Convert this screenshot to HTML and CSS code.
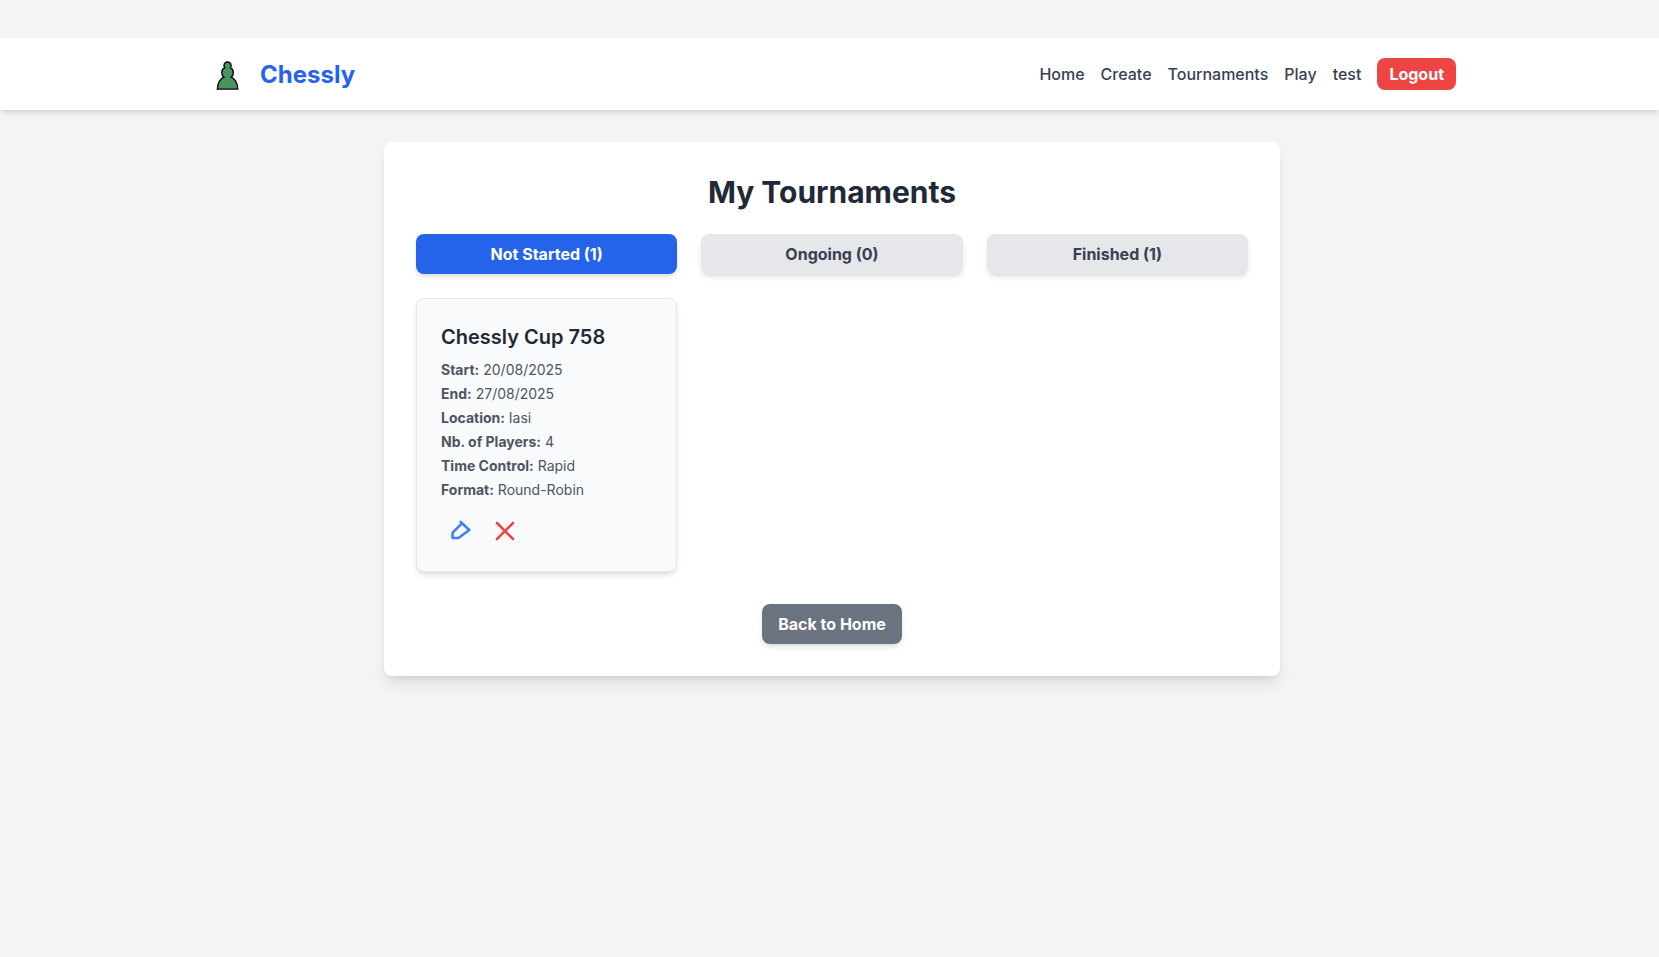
FILE: index.html
```html
<!DOCTYPE html>
<html lang="en">
<head>
<meta charset="utf-8">
<meta name="viewport" content="width=device-width, initial-scale=1">
<title>Chessly</title>
<link rel="stylesheet" href="styles.css">
</head>
<body>
<header class="navbar">
  <div class="navbar-inner">
    <a class="brand" href="#">
      <svg class="brand-logo" viewBox="0 0 45 45" aria-hidden="true"><path d="M22 9c-2.21 0-4 1.79-4 4 0 .89.29 1.71.78 2.38C16.83 16.5 15.5 18.59 15.5 21c0 2.03.94 3.84 2.41 5.03-3 1.06-7.41 5.55-7.41 13.47h23c0-7.92-4.41-12.41-7.41-13.47 1.47-1.19 2.41-3 2.41-5.03 0-2.41-1.33-4.5-3.28-5.62.49-.67.78-1.49.78-2.38 0-2.21-1.79-4-4-4z"/></svg>
      <span class="brand-name">Chessly</span>
    </a>
    <nav class="nav-links">
      <a class="nav-link" href="#">Home</a>
      <a class="nav-link" href="#">Create</a>
      <a class="nav-link" href="#">Tournaments</a>
      <a class="nav-link" href="#">Play</a>
      <a class="nav-link" href="#">test</a>
      <button class="logout" type="button">Logout</button>
    </nav>
  </div>
</header>
<main class="page">
  <section class="panel">
    <h1 class="panel-title">My Tournaments</h1>
    <div class="columns tabs">
      <button class="tab tab-active" type="button">Not Started (1)</button>
      <button class="tab" type="button">Ongoing (0)</button>
      <button class="tab" type="button">Finished (1)</button>
    </div>
    <div class="columns">
      <article class="card">
        <h2 class="card-title">Chessly Cup 758</h2>
        <p class="detail"><strong>Start:</strong> 20/08/2025</p>
        <p class="detail"><strong>End:</strong> 27/08/2025</p>
        <p class="detail"><strong>Location:</strong> Iasi</p>
        <p class="detail"><strong>Nb. of Players:</strong> 4</p>
        <p class="detail"><strong>Time Control:</strong> Rapid</p>
        <p class="detail"><strong>Format:</strong> Round-Robin</p>
        <div class="actions">
          <button class="icon-button edit" type="button" aria-label="Edit">
            <svg class="icon" viewBox="0 0 24 24" aria-hidden="true"><path d="M11.7 3l8.6 8L9.5 19H3.6v-5.4l9-9"/></svg>
          </button>
          <button class="icon-button remove" type="button" aria-label="Delete">
            <svg class="icon" viewBox="0 0 24 24" aria-hidden="true"><path d="M4 4l16 16M20 4L4 20"/></svg>
          </button>
        </div>
      </article>
    </div>
    <a class="back" href="#">Back to Home</a>
  </section>
</main>
</body>
</html>
```

FILE: styles.css
```css
*, *::before, *::after { box-sizing: border-box; }

:root {
  --gutter-shift: 5px;
  --shadow-md: 0 4px 6px -1px rgba(0, 0, 0, 0.1), 0 2px 4px -2px rgba(0, 0, 0, 0.1);
  --shadow-lg: 0 10px 15px -3px rgba(0, 0, 0, 0.1), 0 4px 6px -4px rgba(0, 0, 0, 0.1);
}

body {
  margin: 0;
  padding-top: 38px;
  min-height: 100vh;
  background: #f3f4f6;
  font-family: Inter, "Liberation Sans", sans-serif;
  font-size: 16px;
  line-height: 24px;
  color: #1f2937;
}

h1, h2, p { margin: 0; }
a { color: inherit; text-decoration: none; }
button {
  border: 0;
  padding: 0;
  background: none;
  color: inherit;
  font: inherit;
  cursor: pointer;
}

.navbar {
  padding-left: var(--gutter-shift);
  background: #fff;
  box-shadow: var(--shadow-md);
}
.navbar-inner {
  display: flex;
  justify-content: space-between;
  align-items: center;
  max-width: 1280px;
  margin: 0 auto;
  padding: 16px;
}
.brand { display: flex; align-items: center; gap: 12px; }
.brand-logo {
  width: 40px;
  height: 40px;
  fill: #4a9460;
  stroke: #000;
  stroke-width: 1.5;
  stroke-linecap: round;
}
.brand-name {
  padding-top: 2px;
  color: #2563eb;
  font-size: 24px;
  line-height: 32px;
  font-weight: 700;
}
.nav-links { display: flex; align-items: center; gap: 16px; }
.nav-link { color: #374151; font-weight: 500; }
.logout {
  padding: 4px 12px;
  border-radius: 8px;
  background: #ef4444;
  color: #fff;
  font-weight: 700;
}

.page { padding: 32px 0 32px var(--gutter-shift); }
.panel {
  display: flex;
  flex-direction: column;
  max-width: 896px;
  margin: 0 auto;
  padding: 32px;
  border-radius: 8px;
  background: #fff;
  box-shadow: var(--shadow-lg);
}
.panel-title {
  margin-bottom: 24px;
  font-size: 30px;
  line-height: 36px;
  font-weight: 700;
  text-align: center;
}
.columns {
  display: grid;
  grid-template-columns: repeat(3, minmax(0, 1fr));
  gap: 24px;
}
.tabs { margin-bottom: 24px; }
.tab {
  padding: 8px 16px;
  border-radius: 8px;
  background: #e5e7eb;
  box-shadow: var(--shadow-md);
  color: #374151;
  font-weight: 700;
}
.tab-active { background: #2563eb; color: #fff; }

.card {
  padding: 24px;
  border: 1px solid #e5e7eb;
  border-radius: 8px;
  background: #f9fafb;
  box-shadow: var(--shadow-md);
}
.card-title {
  margin-bottom: 9px;
  font-size: 20px;
  line-height: 28px;
  font-weight: 600;
}
.detail {
  margin-bottom: 4px;
  color: #4b5563;
  font-size: 14px;
  line-height: 20px;
}
.detail strong { font-weight: 700; }
.actions { display: flex; gap: 4px; padding-top: 11px; }
.icon-button {
  display: flex;
  padding: 4px 8px;
  border-radius: 8px;
}
.icon {
  width: 24px;
  height: 24px;
  fill: none;
  stroke: currentColor;
  stroke-width: 2.6;
  stroke-linecap: round;
  stroke-linejoin: round;
}
.edit { color: #3b82f6; }
.remove { color: #ef4444; }

.back {
  align-self: center;
  margin-top: 32px;
  padding: 8px 16px;
  border-radius: 8px;
  background: #6b7280;
  box-shadow: var(--shadow-md);
  color: #fff;
  font-weight: 700;
}
```
